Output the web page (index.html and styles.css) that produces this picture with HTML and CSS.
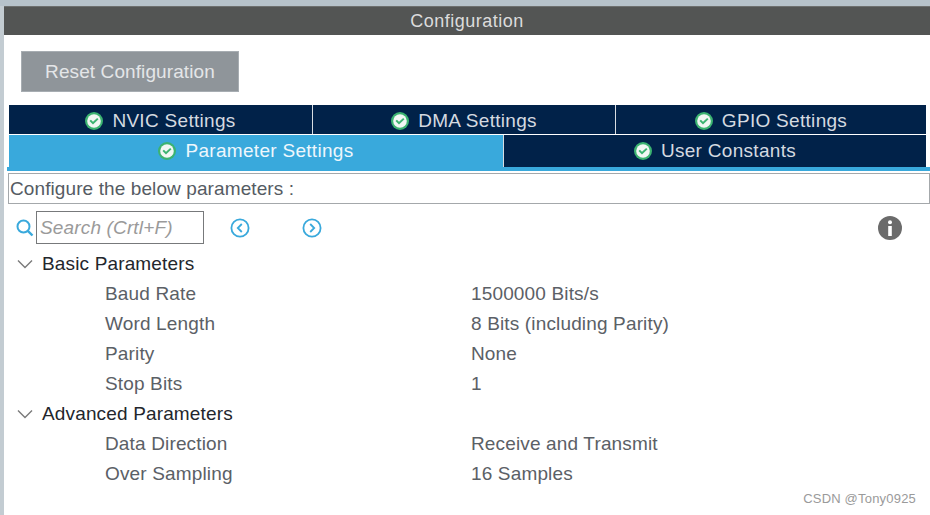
FILE: index.html
```html
<!DOCTYPE html>
<html>
<head>
    <meta charset="utf-8">
    <title>Configuration</title>
    <link rel="stylesheet" href="styles.css">
</head>
<body>
<svg class="defs" width="0" height="0">
    <symbol id="check" viewBox="0 0 18 18">
        <circle cx="9" cy="9" r="9" fill="#3cb371"/>
        <circle cx="9" cy="9" r="6.8" fill="#f2f7f4"/>
        <path d="M5.2 8.4 8 11.2 12.8 6.6" fill="none" stroke="#3cb371" stroke-width="2"/>
    </symbol>
</svg>
<div class="window">
    <div class="title">Configuration</div>
    <div class="reset-row">
        <div class="reset">Reset Configuration</div>
    </div>
    <div class="tabs">
        <div class="tab-row top">
            <div class="tab nvic"><svg class="ok"><use href="#check"/></svg>NVIC Settings</div>
            <div class="tab dma"><svg class="ok"><use href="#check"/></svg>DMA Settings</div>
            <div class="tab gpio"><svg class="ok"><use href="#check"/></svg>GPIO Settings</div>
        </div>
        <div class="tab-row bottom">
            <div class="tab active"><svg class="ok"><use href="#check"/></svg>Parameter Settings</div>
            <div class="tab"><svg class="ok"><use href="#check"/></svg>User Constants</div>
        </div>
    </div>
    <div class="tab-line"></div>
    <div class="hint">Configure the below parameters :</div>
    <div class="toolbar">
        <svg class="lens" width="20" height="20" viewBox="0 0 20 20">
            <circle cx="8.5" cy="8.5" r="6" fill="none" stroke="#39a9dc" stroke-width="2"/>
            <path d="M12.8 12.8 17.5 17.5" stroke="#39a9dc" stroke-width="2.4"/>
        </svg>
        <div class="search">Search (Crtl+F)</div>
        <svg class="nav prev" width="20" height="20" viewBox="0 0 20 20">
            <circle cx="10" cy="10" r="8.6" fill="none" stroke="#39a9dc" stroke-width="1.8"/>
            <path d="M11.8 6 7.8 10 11.8 14" fill="none" stroke="#39a9dc" stroke-width="1.8"/>
        </svg>
        <svg class="nav next" width="20" height="20" viewBox="0 0 20 20">
            <circle cx="10" cy="10" r="8.6" fill="none" stroke="#39a9dc" stroke-width="1.8"/>
            <path d="M8.2 6 12.2 10 8.2 14" fill="none" stroke="#39a9dc" stroke-width="1.8"/>
        </svg>
        <svg class="info" width="24" height="24" viewBox="0 0 24 24">
            <circle cx="12" cy="12" r="12" fill="#6b6b6b"/>
            <circle cx="12" cy="6.2" r="2" fill="#fff"/>
            <rect x="10.2" y="10" width="3.6" height="10" fill="#fff"/>
        </svg>
    </div>
    <div class="params">
        <div class="group">
            <svg class="chev" width="16" height="10" viewBox="0 0 16 10"><path d="M1 1.5 8 8.5 15 1.5" fill="none" stroke="#7a7a7a" stroke-width="1.4"/></svg>
            Basic Parameters
        </div>
        <div class="param"><span class="name">Baud Rate</span><span class="value">1500000 Bits/s</span></div>
        <div class="param"><span class="name">Word Length</span><span class="value">8 Bits (including Parity)</span></div>
        <div class="param"><span class="name">Parity</span><span class="value">None</span></div>
        <div class="param"><span class="name">Stop Bits</span><span class="value">1</span></div>
        <div class="group">
            <svg class="chev" width="16" height="10" viewBox="0 0 16 10"><path d="M1 1.5 8 8.5 15 1.5" fill="none" stroke="#7a7a7a" stroke-width="1.4"/></svg>
            Advanced Parameters
        </div>
        <div class="param"><span class="name">Data Direction</span><span class="value">Receive and Transmit</span></div>
        <div class="param"><span class="name">Over Sampling</span><span class="value">16 Samples</span></div>
    </div>
</div>
<div class="mark">CSDN @Tony0925</div>
</body>
</html>
```

FILE: styles.css
```css
html, body {
    margin: 0;
    height: 100%;
    background: #fff;
    overflow: hidden;
    font-family: "Liberation Sans", Arial, sans-serif;
}

body {
    position: relative;
    box-sizing: border-box;
    padding-top: 6px;
}

body::before {
    content: "";
    position: absolute;
    top: 0;
    left: 0;
    right: 0;
    height: 6px;
    background: #b6c2ca;
}

.defs {
    position: absolute;
}

.window {
    box-sizing: border-box;
    height: 509px;
    border-left: 4px solid #c3ccd2;
}

.title {
    height: 29px;
    line-height: 28px;
    background: #535554;
    border-top: 1px solid #6d6f6e;
    box-sizing: border-box;
    color: #dcdcdc;
    font-size: 18px;
    letter-spacing: 0.5px;
    text-align: center;
}

.reset-row {
    padding: 16px 0 13px 17px;
}

.reset {
    box-sizing: border-box;
    width: 218px;
    height: 41px;
    line-height: 39px;
    background: #8f959a;
    border: 1px solid #a7adb2;
    color: #e4e6e8;
    font-size: 19px;
    letter-spacing: 0.1px;
    text-align: center;
}

.tabs {
    margin-left: 5px;
    width: 917px;
}

.tab-row {
    display: flex;
}

.tab-row.top {
    height: 29px;
    margin-bottom: 1px;
}

.tab-row.bottom {
    height: 32px;
}

.tab {
    flex: 1;
    display: flex;
    align-items: center;
    justify-content: center;
    box-sizing: border-box;
    background: #012249;
    color: #d5dae0;
    font-size: 19px;
    letter-spacing: 0.3px;
    border-left: 1px solid #d8dde2;
}

.tab-row.top .tab {
    padding-top: 2px;
}

.tab.nvic {
    flex: 0 0 303px;
    border-left: 0;
}

.tab.dma {
    flex: 0 0 303px;
}

.tab.gpio {
    flex: 0 0 311px;
}

.tab-row.bottom .tab {
    flex: 0 0 423px;
}

.tab-row.bottom .tab.active {
    flex: 0 0 494px;
    background: #39a9dc;
    color: #eef7fc;
    border-left: 0;
}

.ok {
    flex: none;
    width: 18px;
    height: 18px;
    margin-right: 9px;
}

.tab-line {
    height: 4px;
    margin-left: 3px;
    background: #39a9dc;
}

.hint {
    box-sizing: border-box;
    height: 31px;
    margin: 2px 0 0 4px;
    line-height: 29px;
    padding-left: 1px;
    border: 1px solid #a4a8ab;
    color: #555b63;
    font-size: 19px;
    letter-spacing: 0.1px;
}

.toolbar {
    display: flex;
    align-items: center;
    height: 33px;
    margin-top: 7px;
    padding-left: 11px;
}

.lens {
    flex: none;
    margin-top: 1px;
    margin-right: 1px;
}

.search {
    box-sizing: border-box;
    width: 168px;
    height: 33px;
    line-height: 31px;
    padding-left: 3px;
    border: 1px solid #77797b;
    color: #9a9a9a;
    font-size: 19px;
    font-style: italic;
    letter-spacing: 0.15px;
}

.nav.prev {
    margin-left: 26px;
}

.nav.next {
    margin-left: 52px;
}

.info {
    margin-left: auto;
    margin-right: 28px;
}

.params {
    padding-top: 5px;
}

.group, .param {
    height: 30px;
    line-height: 30px;
    font-size: 19px;
    letter-spacing: 0.15px;
}

.group {
    display: flex;
    align-items: center;
    padding-left: 13px;
    color: #23262c;
}

.chev {
    margin-right: 9px;
}

.param {
    display: flex;
    color: #5b6066;
}

.name {
    width: 366px;
    margin-left: 101px;
}

.mark {
    position: absolute;
    right: 14px;
    bottom: 9px;
    color: #9a9a9a;
    font-size: 13px;
    letter-spacing: 0.2px;
}
```
